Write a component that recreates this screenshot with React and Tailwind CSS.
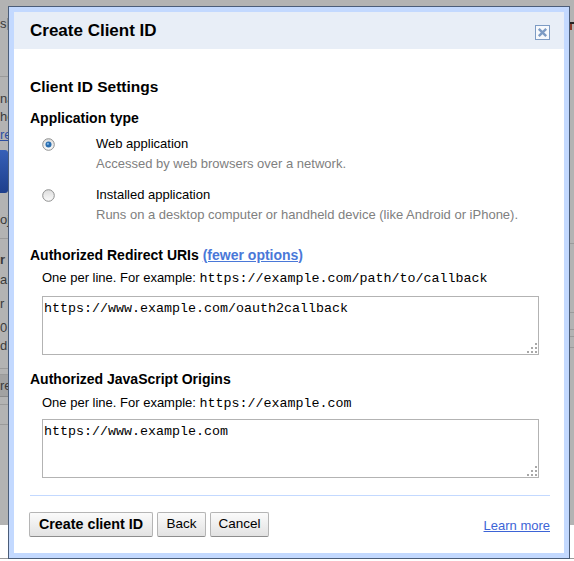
import React from 'react';

const mono = "font-['Liberation_Mono','Courier_New',monospace]";

function Radio({ checked }) {
    return (
        <svg width="13" height="13" viewBox="0 0 13 13" className="block">
            <defs>
                <linearGradient id={checked ? 'rg1' : 'rg2'} x1="0" y1="0" x2="0" y2="1">
                    <stop offset="0" stopColor="#dcdcdc" />
                    <stop offset="1" stopColor="#fbfbfb" />
                </linearGradient>
            </defs>
            <circle cx="6.5" cy="6.5" r="5.8" fill={`url(#${checked ? 'rg1' : 'rg2'})`} stroke="#8e8f8f" strokeWidth="1" />
            {checked && <circle cx="6.5" cy="6.5" r="3" fill="#2a6eb0" />}
            {checked && <circle cx="5.9" cy="5.8" r="1.1" fill="#7fb6e6" />}
        </svg>
    );
}

function Grip() {
    return (
        <svg width="10" height="10" viewBox="0 0 10 10" className="absolute right-[2px] bottom-[2px]">
            <rect x="8" y="0" width="2" height="2" fill="#a8a8a8" />
            <rect x="4" y="4" width="2" height="2" fill="#a8a8a8" />
            <rect x="8" y="4" width="2" height="2" fill="#a8a8a8" />
            <rect x="0" y="8" width="2" height="2" fill="#a8a8a8" />
            <rect x="4" y="8" width="2" height="2" fill="#a8a8a8" />
            <rect x="8" y="8" width="2" height="2" fill="#a8a8a8" />
        </svg>
    );
}

function UriBox({ value }) {
    return (
        <div className="relative ml-[12px] w-[497px] h-[59px]">
            <textarea
                readOnly
                defaultValue={value}
                className={`block w-full h-full resize-none border border-[#b3b3b3] bg-white pl-[1px] pt-[4px] text-[13.33px] leading-[16px] text-black outline-none ${mono}`}
            />
            <Grip />
        </div>
    );
}

function Button({ children, bold, width }) {
    return (
        <button
            className={`h-[25px] ${width} rounded-[2px] border border-[#b5b5b5] border-b-[#8d8d8d] bg-gradient-to-b from-[#fbfbfb] to-[#e2e2e2] text-black ${bold ? 'font-bold text-[14.3px]' : 'text-[13.5px]'}`}
        >
            {children}
        </button>
    );
}

function LeftStrip() {
    return (
        <div className="w-[8px] h-full overflow-hidden flex flex-col text-[13px] leading-[18px] text-[#3a3a3a] whitespace-nowrap">
            <div className="h-[16px]" />
            <div className="h-[16px] flex items-center">
                <span className="leading-[16px]">s</span>
                <span className="ml-auto w-[1px] h-[12px] bg-[#8f8f8f]" />
            </div>
            <div className="h-[45px] border-b border-[#9a9a9a]" />
            <div className="h-[13px]" />
            <div>na</div>
            <div>ho</div>
            <div className="text-[#2c4fa3] underline">re</div>
            <div className="h-[6px]" />
            <div className="h-[43px] rounded-r-[3px] bg-gradient-to-b from-[#3660b8] to-[#1e3f8c]" />
            <div className="h-[18px]" />
            <div>oj</div>
            <div className="h-[10px] border-b border-[#9a9a9a]" />
            <div className="h-[12px]" />
            <div className="font-bold">r</div>
            <div className="h-[2px]" />
            <div>a</div>
            <div className="h-[6px]" />
            <div>r a</div>
            <div className="h-[6px]" />
            <div>01</div>
            <div>d</div>
            <div className="h-[14px] border-b border-[#9a9a9a]" />
            <div className="h-[6px] border-b border-[#9a9a9a]" />
            <div className="h-[22px] bg-[#a2a2a2] border-b border-[#8a8a8a] leading-[22px]">re</div>
            <div className="h-[8px] border-b border-[#9a9a9a]" />
            <div className="h-[20px] border-b border-[#9a9a9a]" />
        </div>
    );
}

function RightStrip() {
    return (
        <div className="w-[4px] h-full overflow-hidden flex flex-col">
            <div className="h-[22px]" />
            <div className="h-[2px] bg-[#222]" />
            <div className="h-[6px] w-[2px] bg-[#8a3a2a]" />
            <div className="h-[214px] border-b border-[#9a9a9a]" />
            <div className="h-[69px] border-b border-[#9a9a9a]" />
            <div className="h-[17px] border-b border-[#9a9a9a]" />
            <div className="h-[7px] border-b border-[#9a9a9a]" />
            <div className="h-[11px] border-b border-[#9a9a9a]" />
        </div>
    );
}

export default function App() {
    return (
        <div className="relative w-[574px] h-[561px] overflow-hidden bg-white font-['Liberation_Sans',Arial,sans-serif]">
            <div className="flex flex-col">
                <div className="h-[525px] bg-[#b3b3b3] flex justify-between">
                    <LeftStrip />
                    <RightStrip />
                </div>
                <div className="h-[34px] border-b border-[#9a9a9a] bg-white" />
            </div>

            <div className="absolute left-[8px] top-[6px] w-[562px] h-[553px] border border-[#4b5d79]">
                <div className="h-full border-[5px] border-[#c3d9ff] bg-white flex flex-col">
                    <div className="h-[37px] shrink-0 bg-[#e8eef7] flex items-start justify-between pl-[16px] pr-[14px] pt-[9px]">
                        <p className="text-[17px] leading-[20px] font-bold text-black">Create Client ID</p>
                        <button className="mt-[4px] w-[15px] h-[15px] border border-[#7d9bc4] bg-[#f7f9fc] flex items-center justify-center">
                            <svg width="11" height="11" viewBox="0 0 11 11">
                                <path d="M1.8 1.8 L9.2 9.2 M9.2 1.8 L1.8 9.2" stroke="#7d9bc4" strokeWidth="2.4" />
                            </svg>
                        </button>
                    </div>

                    <div className="pl-[16px] pr-[14px] flex flex-col">
                        <p className="mt-[29px] text-[15.5px] leading-[18px] font-bold text-black">Client ID Settings</p>
                        <p className="mt-[14px] text-[14px] leading-[17px] font-bold text-black">Application type</p>

                        <div className="mt-[9px] flex text-[13px] leading-[16px]">
                            <div className="pl-[12px] w-[66px] pt-[2px]">
                                <Radio checked />
                            </div>
                            <div>
                                <p className="text-black">Web application</p>
                                <p className="mt-[4px] text-[#808080]">Accessed by web browsers over a network.</p>
                            </div>
                        </div>
                        <div className="mt-[15px] flex text-[13px] leading-[16px]">
                            <div className="pl-[12px] w-[66px] pt-[2px]">
                                <Radio />
                            </div>
                            <div>
                                <p className="text-black">Installed application</p>
                                <p className="mt-[4px] text-[#808080]">
                                    Runs on a desktop computer or handheld device (like Android or iPhone).
                                </p>
                            </div>
                        </div>

                        <p className="mt-[24px] text-[14px] leading-[17px] font-bold text-black">
                            Authorized Redirect URIs{' '}
                            <a href="#" className="text-[#4a78d8] underline">(fewer options)</a>
                        </p>
                        <p className="mt-[6px] pl-[12px] text-[13px] leading-[16px] text-black">
                            One per line. For example:{' '}
                            <span className={`${mono} text-[13.33px]`}>https://example.com/path/to/callback</span>
                        </p>
                        <div className="mt-[9px]">
                            <UriBox value="https://www.example.com/oauth2callback" />
                        </div>

                        <p className="mt-[16px] text-[14px] leading-[17px] font-bold text-black">
                            Authorized JavaScript Origins
                        </p>
                        <p className="mt-[7px] pl-[12px] text-[13px] leading-[16px] text-black">
                            One per line. For example:{' '}
                            <span className={`${mono} text-[13.33px]`}>https://example.com</span>
                        </p>
                        <div className="mt-[7px]">
                            <UriBox value="https://www.example.com" />
                        </div>

                        <div className="mt-[17px] h-[1px] bg-[#c3d9ff]" />

                        <div className="mt-[16px] flex justify-between">
                            <div className="flex gap-[4px] -ml-[1px]">
                                <Button bold width="w-[124px]">Create client ID</Button>
                                <Button width="w-[49px]">Back</Button>
                                <Button width="w-[59px]">Cancel</Button>
                            </div>
                            <a href="#" className="self-end mb-[3px] text-[13px] leading-[16px] text-[#3d64d6] underline">
                                Learn more
                            </a>
                        </div>
                    </div>
                </div>
            </div>
        </div>
    );
}
